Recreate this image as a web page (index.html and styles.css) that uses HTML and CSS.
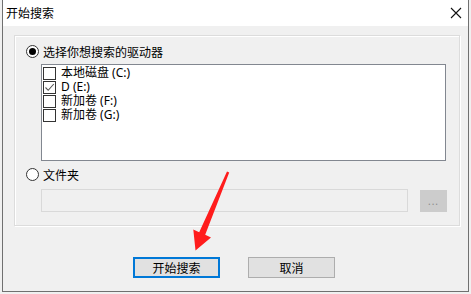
FILE: index.html
```html
<!DOCTYPE html>
<html>
<head>
<meta charset="utf-8">
<link rel="stylesheet" href="styles.css">
</head>
<body>
<div class="window">
  <div class="titlebar">
    <span class="title">开始搜索</span>
    <svg class="close" width="12" height="12" viewBox="0 0 12 12"><path d="M1 1 L11 11 M11 1 L1 11" stroke="#111" stroke-width="1.1" fill="none"/></svg>
  </div>
  <div class="content">
    <div class="group">
      <div class="radio-row first">
        <span class="radio checked"><span class="dot"></span></span>
        <span class="label">选择你想搜索的驱动器</span>
      </div>
      <div class="listbox">
        <div class="item"><span class="cb"></span><span class="txt">本地磁盘 (C:)</span></div>
        <div class="item"><span class="cb"><svg width="11" height="11" viewBox="0 0 11 11"><path d="M1.5 5.5 L4.2 8.3 L9.8 2" stroke="#555" stroke-width="1.1" fill="none"/></svg></span><span class="txt">D (E:)</span></div>
        <div class="item"><span class="cb"></span><span class="txt">新加卷 (F:)</span></div>
        <div class="item"><span class="cb"></span><span class="txt">新加卷 (G:)</span></div>
      </div>
      <div class="radio-row second">
        <span class="radio"></span>
        <span class="label">文件夹</span>
      </div>
      <div class="field-row">
        <div class="field"></div>
        <div class="browse">...</div>
      </div>
    </div>
    <div class="buttons">
      <div class="btn primary">开始搜索</div>
      <div class="btn">取消</div>
    </div>
  </div>
</div>
<svg class="arrow" width="471" height="294" viewBox="0 0 471 294">
  <polygon points="229.2,172.6 205.2,234.8 211,237.4 195.5,250.5 193.3,229.4 199.2,232.2 227,171.4" fill="#ff1c1c"/>
</svg>
</body>
</html>
```
FILE: styles.css
```css
html, body {
  margin: 0;
  padding: 0;
}
body {
  width: 471px;
  height: 294px;
  background: #f0f0f0;
  font-family: "Noto Sans", "Noto Sans CJK SC", sans-serif;
  font-size: 12px;
  color: #000;
  overflow: hidden;
  position: relative;
}
.window {
  margin-left: 2px;
  width: 465px;
  height: 291px;
  border-left: 1px solid #707070;
  border-right: 1px solid #707070;
  border-bottom: 1px solid #707070;
  box-sizing: content-box;
  background: #f0f0f0;
}
.titlebar {
  height: 26px;
  background: #ffffff;
  display: flex;
  align-items: center;
  justify-content: space-between;
  padding-left: 3px;
  padding-right: 6px;
}
.title {
  font-family: "Noto Sans CJK SC", sans-serif;
  font-size: 12px;
  line-height: 14px;
  margin-top: -1px;
}
.close {
  margin-top: -1px;
}
.content {
  display: flex;
  flex-direction: column;
}
.group {
  margin-top: 9px;
  margin-left: 11px;
  width: 444px;
  height: 189px;
  border: 1px solid #dcdcdc;
  box-shadow: inset 1px 1px 0 #ffffff, 1px 1px 0 #ffffff;
  display: flex;
  flex-direction: column;
}
.radio-row {
  display: flex;
  align-items: center;
  height: 15px;
  padding-left: 11px;
}
.radio-row.first {
  margin-top: 8px;
}
.radio-row.second {
  margin-top: 6px;
}
.radio {
  width: 11px;
  height: 11px;
  border: 1px solid #333333;
  border-radius: 50%;
  background: #ffffff;
  display: flex;
  align-items: center;
  justify-content: center;
  margin-right: 4px;
}
.dot {
  width: 7px;
  height: 7px;
  border-radius: 50%;
  background: #000;
}
.label {
  font-family: "Noto Sans CJK SC", sans-serif;
  font-size: 12px;
  line-height: 15px;
}
.listbox {
  margin-top: 5px;
  margin-left: 26px;
  width: 403px;
  height: 94px;
  border: 1px solid #828790;
  background: #ffffff;
  padding-top: 1px;
  box-sizing: content-box;
}
.item {
  display: flex;
  align-items: center;
  height: 14px;
  padding-left: 1px;
}
.cb {
  width: 11px;
  height: 11px;
  border: 1px solid #333333;
  background: #fff;
  display: flex;
  align-items: center;
  justify-content: center;
  margin-right: 5px;
}
.txt {
  font-family: "Noto Sans", "Noto Sans CJK SC", sans-serif;
  font-size: 12px;
  line-height: 14px;
}
.field-row {
  display: flex;
  margin-top: 7px;
  margin-left: 26px;
}
.field {
  width: 365px;
  height: 21px;
  border: 1px solid #d9d9d9;
  background: #f0f0f0;
}
.browse {
  margin-left: 12px;
  margin-top: 1px;
  width: 27px;
  height: 22px;
  background: #cccccc;
  color: #8a8a8a;
  font-size: 10px;
  line-height: 22px;
  text-align: center;
  letter-spacing: 1px;
}
.buttons {
  display: flex;
  gap: 28px;
  margin-top: 31px;
  margin-left: 130px;
}
.btn {
  width: 85px;
  height: 19px;
  border: 1px solid #adadad;
  background: #e1e1e1;
  font-family: "Noto Sans CJK SC", sans-serif;
  font-size: 12px;
  line-height: 19px;
  text-align: center;
}
.btn.primary {
  width: 83px;
  height: 17px;
  border: 2px solid #0078d7;
  line-height: 17px;
}
.arrow {
  position: absolute;
  left: 0;
  top: 0;
  pointer-events: none;
}
```
